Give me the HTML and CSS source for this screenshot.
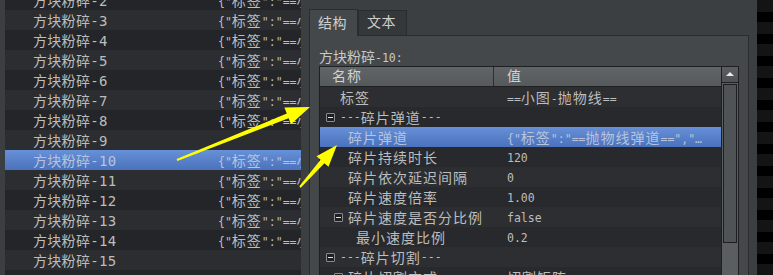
FILE: index.html
```html
<!DOCTYPE html>
<html>
<head>
<meta charset="utf-8">
<link rel="stylesheet" href="styles.css">
</head>
<body>
<div class="app">
  <div class="edge"></div>
  <div class="list">
    <div class="list-inner">
      <div class="lrow"><span class="lname">方块粉碎-2</span><span class="lval"><span class="m">{"</span>标签<span class="m">":"==</span>小图<span class="m">-</span>抛物线</span></div>
      <div class="lrow alt"><span class="lname">方块粉碎-3</span><span class="lval"><span class="m">{"</span>标签<span class="m">":"==</span>小图<span class="m">-</span>抛物线</span></div>
      <div class="lrow"><span class="lname">方块粉碎-4</span><span class="lval"><span class="m">{"</span>标签<span class="m">":"==</span>小图<span class="m">-</span>抛物线</span></div>
      <div class="lrow alt"><span class="lname">方块粉碎-5</span><span class="lval"><span class="m">{"</span>标签<span class="m">":"==</span>小图<span class="m">-</span>抛物线</span></div>
      <div class="lrow"><span class="lname">方块粉碎-6</span><span class="lval"><span class="m">{"</span>标签<span class="m">":"==</span>小图<span class="m">-</span>抛物线</span></div>
      <div class="lrow alt"><span class="lname">方块粉碎-7</span><span class="lval"><span class="m">{"</span>标签<span class="m">":"==</span>小图<span class="m">-</span>抛物线</span></div>
      <div class="lrow"><span class="lname">方块粉碎-8</span><span class="lval"><span class="m">{"</span>标签<span class="m">":"==</span>小图<span class="m">-</span>抛物线</span></div>
      <div class="lrow alt"><span class="lname">方块粉碎-9</span><span class="lval"></span></div>
      <div class="lrow sel"><span class="lname">方块粉碎-10</span><span class="lval"><span class="m">{"</span>标签<span class="m">":"==</span>小图<span class="m">-</span>抛物线</span></div>
      <div class="lrow alt"><span class="lname">方块粉碎-11</span><span class="lval"><span class="m">{"</span>标签<span class="m">":"==</span>小图<span class="m">-</span>抛物线</span></div>
      <div class="lrow"><span class="lname">方块粉碎-12</span><span class="lval"><span class="m">{"</span>标签<span class="m">":"==</span>小图<span class="m">-</span>抛物线</span></div>
      <div class="lrow alt"><span class="lname">方块粉碎-13</span><span class="lval"><span class="m">{"</span>标签<span class="m">":"==</span>小图<span class="m">-</span>抛物线</span></div>
      <div class="lrow"><span class="lname">方块粉碎-14</span><span class="lval"><span class="m">{"</span>标签<span class="m">":"==</span>小图<span class="m">-</span>抛物线</span></div>
      <div class="lrow alt"><span class="lname">方块粉碎-15</span><span class="lval"></span></div>
      <div class="lrow"><span class="lname"></span><span class="lval"></span></div>
    </div>
  </div>
  <div class="split"></div>
  <div class="tabs">
    <div class="tabbar">
      <div class="tab active">结构</div>
      <div class="tab">文本</div>
    </div>
    <div class="panel">
      <div class="caption">方块粉碎<span class="m">-10:</span></div>
      <div class="grid">
        <div class="table">
          <div class="thead">
            <div class="th name">名称</div>
            <div class="th val">值</div>
          </div>
          <div class="tbody">
            <div class="trow alt"><div class="tn l0">标签</div><div class="tv"><span class="m">==</span>小图<span class="m">-</span>抛物线<span class="m">==</span></div></div>
            <div class="trow"><div class="tn l0 g"><i class="box"></i><span class="m">---</span>碎片弹道<span class="m">---</span></div><div class="tv"></div></div>
            <div class="trow sel"><div class="tn l1">碎片弹道</div><div class="tv"><span class="m">{"</span>标签<span class="m">":"==</span>抛物线弹道<span class="m">==","…</span></div></div>
            <div class="trow"><div class="tn l1">碎片持续时长</div><div class="tv"><span class="m">120</span></div></div>
            <div class="trow alt"><div class="tn l1">碎片依次延迟间隔</div><div class="tv"><span class="m">0</span></div></div>
            <div class="trow"><div class="tn l1">碎片速度倍率</div><div class="tv"><span class="m">1.00</span></div></div>
            <div class="trow alt"><div class="tn l1 g"><i class="box"></i>碎片速度是否分比例</div><div class="tv"><span class="m">false</span></div></div>
            <div class="trow"><div class="tn l2">最小速度比例</div><div class="tv"><span class="m">0.2</span></div></div>
            <div class="trow alt"><div class="tn l0 g"><i class="box"></i><span class="m">---</span>碎片切割<span class="m">---</span></div><div class="tv"></div></div>
            <div class="trow"><div class="tn l1 g"><i class="box"></i>碎片切割方式</div><div class="tv">切割矩阵</div></div>
          </div>
        </div>
        <div class="vscroll">
          <div class="sbtn"><i class="tri"></i></div>
          <div class="track"><div class="thumb"></div></div>
        </div>
      </div>
    </div>
  </div>
  <div class="gap"></div>
  <div class="dark"></div>
  <svg class="arrows" width="773" height="275" viewBox="0 0 773 275">
    <polygon fill="#ffff00" points="176.6,159.1 286.8,113.6 284.4,107.5 310,107 291.0,124.3 288.6,118.2 177.4,160.9"/>
    <polygon fill="#ffff00" points="299.3,186.3 320.6,159.8 316.5,156.2 337,145 328.5,166.8 324.4,163.2 300.7,187.7"/>
  </svg>
</div>
</body>
</html>
```
FILE: styles.css
```css
* { box-sizing: border-box; margin: 0; padding: 0; }
html, body {
  width: 773px;
  height: 275px;
  overflow: hidden;
  background: #3c3f41;
}
body {
  font-family: "DejaVu Sans Mono", "Noto Sans CJK SC", monospace;
  color: #bdbdbd;
}
.app {
  position: relative;
  display: flex;
  width: 773px;
  height: 275px;
  overflow: hidden;
}
.edge { width: 5px; flex: none; background: #3c3f41; }
.list {
  width: 296px;
  flex: none;
  overflow: hidden;
  background: #232528;
}
.list-inner { margin-top: -10px; }
.lrow {
  display: flex;
  align-items: center;
  height: 20px;
  white-space: nowrap;
  background: #232528;
}
.lrow.alt { background: #2b2d30; }
.lrow.sel {
  background: linear-gradient(#6690d8, #4b72bc);
  color: #b7c4dc;
}
.lname {
  flex: none;
  width: 213px;
  padding-left: 28px;
  font-size: 14px;
  letter-spacing: 0.3px;
}
.lval {
  font-size: 14px;
  letter-spacing: 1px;
}
.m {
  font-size: 11.5px;
  letter-spacing: 0;
}
.split { width: 8px; flex: none; background: #3c3f41; }
.tabs {
  width: 440px;
  flex: none;
  display: flex;
  flex-direction: column;
  overflow: hidden;
}
.tabbar {
  display: flex;
  align-items: flex-end;
  height: 35px;
  padding-top: 9px;
}
.tab {
  width: 49px;
  height: 25px;
  border: 1px solid #2a2c2e;
  border-bottom: none;
  background: #35383a;
  color: #cfcfcf;
  font-size: 14px;
  line-height: 23px;
  padding-left: 8px;
  letter-spacing: 0.5px;
}
.tab.active {
  position: relative;
  height: 27px;
  margin-bottom: -1px;
  background: #45484a;
  line-height: 26px;
}
.panel {
  flex: 1;
  min-height: 0;
  overflow: hidden;
  background: #45484a;
  border: 1px solid #2a2c2e;
  border-bottom: none;
  padding: 12px 9px 0 9px;
}
.caption {
  height: 18px;
  line-height: 18px;
  font-size: 14px;
  color: #c8c8c8;
}
.grid {
  display: flex;
  height: 300px;
}
.table {
  flex: 1;
  border-left: 1px solid #1e2022;
  border-top: 1px solid #1e2022;
  background: #27292c;
}
.thead {
  display: flex;
  height: 20px;
  border-bottom: 1px solid #1e2022;
  background: linear-gradient(#616568, #55595c);
}
.th {
  color: #d2d2d2;
  font-size: 14px;
  letter-spacing: 1px;
  line-height: 19px;
}
.th.name {
  width: 174px;
  flex: none;
  padding-left: 12px;
  border-right: 1px solid #2c2e30;
}
.th.val { padding-left: 13px; }
.trow {
  display: flex;
  align-items: center;
  height: 20px;
  white-space: nowrap;
  background: #27292c;
  font-size: 14px;
  letter-spacing: 1px;
}
.trow.alt { background: #2c2e31; }
.trow.sel {
  background: linear-gradient(#6690d8, #4b72bc);
  color: #b7c4dc;
}
.tn {
  width: 174px;
  flex: none;
  display: flex;
  align-items: center;
}
.tn.l0 { padding-left: 20px; }
.tn.l1 { padding-left: 28px; }
.tn.l2 { padding-left: 36px; }
.tv { padding-left: 13px; overflow: hidden; }
.box {
  position: relative;
  display: inline-block;
  flex: none;
  width: 9px;
  height: 9px;
  margin-left: -14px;
  margin-right: 5px;
  border: 1px solid #8a8c8e;
  border-radius: 1px;
  background: #1e1f21;
}
.box::after {
  content: "";
  position: absolute;
  left: 1px;
  right: 1px;
  top: 3px;
  height: 1px;
  background: #e0e0e0;
}
.vscroll {
  width: 18px;
  flex: none;
  border-left: 1px solid #1e2022;
  border-right: 1px solid #1e2022;
  display: flex;
  flex-direction: column;
}
.sbtn {
  height: 17px;
  border-top: 1px solid #1e2022;
  border-bottom: 1px solid #1e2022;
  background: linear-gradient(#5a5e61, #4e5255);
  display: flex;
  justify-content: center;
  padding-top: 5px;
}
.tri {
  width: 0;
  height: 0;
  border-left: 4px solid transparent;
  border-right: 4px solid transparent;
  border-bottom: 4px solid #eaeaea;
}
.track {
  flex: 1;
  background: #5a5e61;
  padding: 1px 0 0 1px;
}
.thumb {
  width: 14px;
  height: 159px;
  border: 1px solid #1c1e20;
  background: #4f5356;
}
.gap { width: 8px; flex: none; background: #3c3f41; }
.dark {
  width: 16px;
  flex: none;
  background: repeating-linear-gradient(to bottom, #141414 0 12px, #000 12px 22px);
}
.arrows {
  position: absolute;
  left: 0;
  top: 0;
  pointer-events: none;
}
```
